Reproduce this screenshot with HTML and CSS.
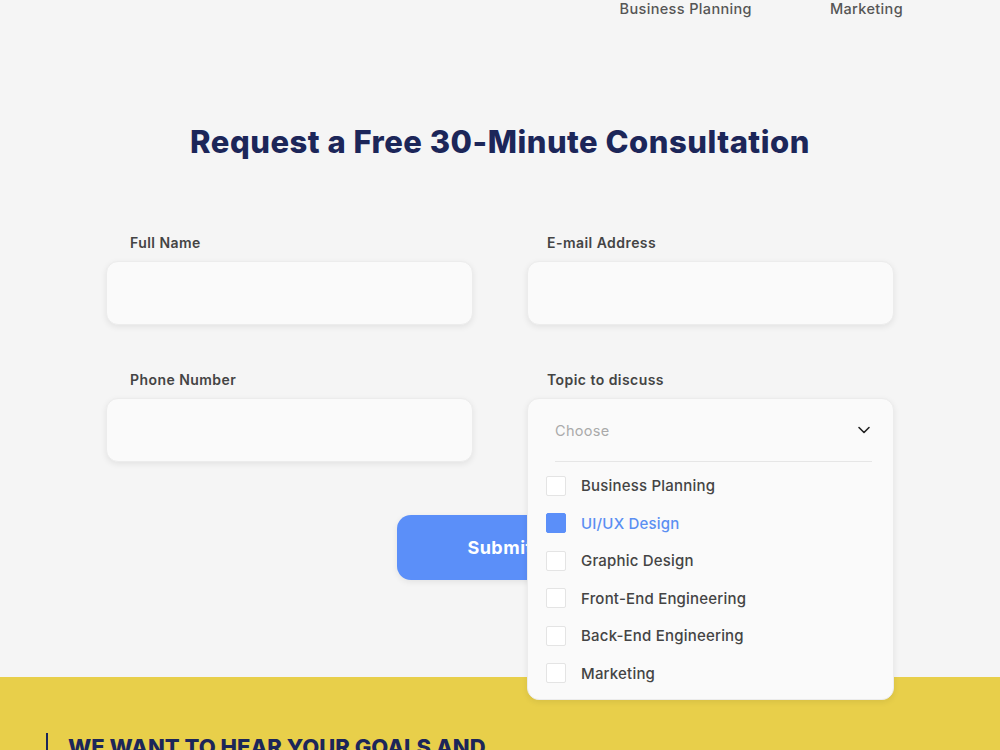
FILE: index.html
```html
<!DOCTYPE html>
<html lang="en">
<head>
    <meta charset="UTF-8">
    <meta name="viewport" content="width=device-width, initial-scale=1.0">
    <title>Free Consultation</title>
    <link rel="stylesheet" href="styles.css">
</head>
<body>
    <div class="top-links">
        <a href="#">Business Planning</a>
        <a href="#">Marketing</a>
    </div>

    <section class="consult">
        <h1>Request a Free 30-Minute Consultation</h1>
        <form class="consult-form">
            <div class="field">
                <label for="fullName">Full Name</label>
                <input type="text" id="fullName">
            </div>
            <div class="field">
                <label for="email">E-mail Address</label>
                <input type="email" id="email">
            </div>
            <div class="field">
                <label for="phone">Phone Number</label>
                <input type="tel" id="phone">
            </div>
            <div class="field">
                <label>Topic to discuss</label>
                <div class="select">
                    <!-- Открытый список тем -->
                    <div class="select-panel">
                        <div class="select-head">
                            <span>Choose</span>
                            <svg width="16" height="16" viewBox="0 0 16 16"><path d="M3 5.5l5 5 5-5" fill="none" stroke="#222" stroke-width="1.6" stroke-linecap="round" stroke-linejoin="round"/></svg>
                        </div>
                        <ul class="select-list">
                            <li><span class="check"></span>Business Planning</li>
                            <li class="selected"><span class="check"></span>UI/UX Design</li>
                            <li><span class="check"></span>Graphic Design</li>
                            <li><span class="check"></span>Front-End Engineering</li>
                            <li><span class="check"></span>Back-End Engineering</li>
                            <li><span class="check"></span>Marketing</li>
                        </ul>
                    </div>
                </div>
            </div>
            <div class="actions">
                <button type="submit">Submit</button>
            </div>
        </form>
    </section>

    <section class="goals">
        <h2>WE WANT TO HEAR YOUR GOALS AND</h2>
    </section>
</body>
</html>
```

FILE: styles.css
```css
body {
    font-family: Inter, "Open Sans", sans-serif;
    background-color: #f5f5f5;
    margin: 0;
    padding: 0;
    color: #444;
}
.top-links {
    display: flex;
    justify-content: flex-end;
    gap: 78px;
    padding: 1px 97px 0 0;
    height: 17px;
    line-height: 16px;
}
.top-links a {
    color: #555;
    text-decoration: none;
    font-size: 14.5px;
    font-weight: 500;
    letter-spacing: 0.35px;
}
.consult {
    padding: 106px 0 97px;
}
h1 {
    margin: 0 0 74px;
    text-align: center;
    font-size: 31px;
    font-weight: 800;
    letter-spacing: 0.5px;
    color: #1c2659;
    line-height: 36px;
}
.consult-form {
    width: 788px;
    margin: 0 auto;
    display: grid;
    grid-template-columns: 1fr 1fr;
    column-gap: 54px;
    row-gap: 46px;
}
.field label {
    display: block;
    padding-left: 24px;
    margin-bottom: 9px;
    font-size: 14px;
    font-weight: 600;
    letter-spacing: 0.45px;
    color: #444;
    line-height: 18px;
}
.field:nth-child(even) label {
    padding-left: 20px;
}
.field input {
    box-sizing: border-box;
    width: 100%;
    height: 64px;
    border: 1px solid #ececec;
    border-radius: 12px;
    background-color: #fafafa;
    box-shadow: 0 2px 6px rgba(0, 0, 0, 0.08);
    outline: none;
}
.select {
    position: relative;
    height: 64px;
}
.select-panel {
    position: absolute;
    top: 0;
    left: 0;
    right: 0;
    z-index: 2;
    background-color: #fafafa;
    border: 1px solid #ececec;
    border-radius: 12px;
    box-shadow: 0 2px 6px rgba(0, 0, 0, 0.08);
}
.select-head {
    display: flex;
    justify-content: space-between;
    align-items: center;
    height: 62px;
    margin: 0 21px 0 27px;
    border-bottom: 1px solid #e6e6e6;
    font-size: 14.5px;
    letter-spacing: 0.3px;
    color: #aaa;
}
.select-list {
    list-style: none;
    margin: 0;
    padding: 5px 0 7px 18px;
}
.select-list li {
    display: flex;
    align-items: center;
    gap: 15px;
    height: 37.5px;
    font-size: 15px;
    font-weight: 500;
    letter-spacing: 0.2px;
    color: #444;
}
.check {
    box-sizing: border-box;
    width: 20px;
    height: 20px;
    border: 1px solid #e4e4e4;
    border-radius: 2px;
    background-color: #fff;
}
.select-list .selected {
    color: #5b8ff2;
}
.selected .check {
    background-color: #5b8ff9;
    border-color: #5b8ff9;
}
.actions {
    grid-column: 1 / 3;
    display: flex;
    justify-content: center;
    padding-top: 7px;
}
button {
    width: 206px;
    height: 65px;
    border: none;
    border-radius: 14px;
    background-color: #5b8ff9;
    color: #fff;
    font-family: inherit;
    font-size: 18px;
    font-weight: 700;
    letter-spacing: 0.5px;
    box-shadow: 0 2px 6px rgba(0, 0, 0, 0.08);
    cursor: pointer;
}
.goals {
    background-color: #e8cf4a;
    padding: 56px 46px 60px;
}
.goals h2 {
    margin: 0;
    padding-left: 20px;
    border-left: 2px solid #1c2659;
    font-size: 22px;
    font-weight: 800;
    color: #1c2659;
    line-height: 28px;
}
```
